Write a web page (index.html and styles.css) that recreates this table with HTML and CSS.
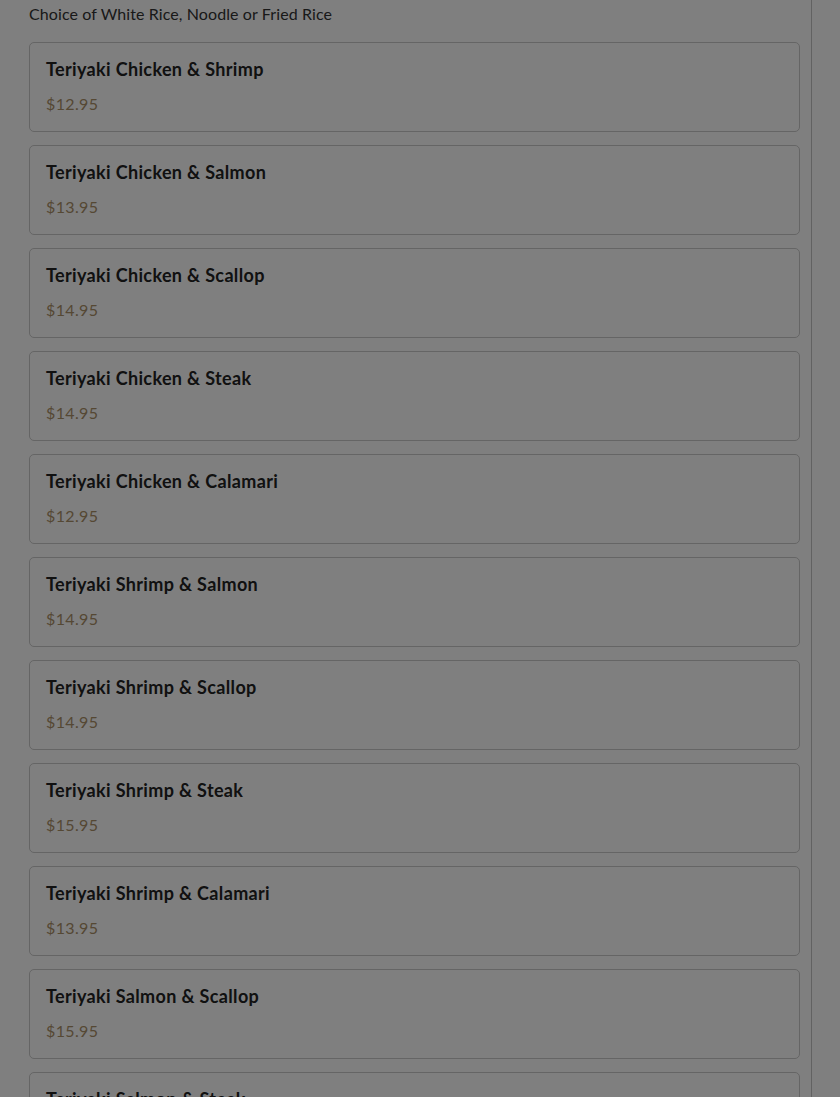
FILE: index.html
```html
<!DOCTYPE html>
<html>
<head>
<meta charset="utf-8">
<link rel="stylesheet" href="styles.css">
</head>
<body>
<div class="page">
  <main class="panel">
    <p class="subtitle">Choice of White Rice, Noodle or Fried Rice</p>
    <ul class="items">
      <li class="card"><h3 class="name">Teriyaki Chicken &amp; Shrimp</h3><div class="price">$12.95</div></li>
      <li class="card"><h3 class="name">Teriyaki Chicken &amp; Salmon</h3><div class="price">$13.95</div></li>
      <li class="card"><h3 class="name">Teriyaki Chicken &amp; Scallop</h3><div class="price">$14.95</div></li>
      <li class="card"><h3 class="name">Teriyaki Chicken &amp; Steak</h3><div class="price">$14.95</div></li>
      <li class="card"><h3 class="name">Teriyaki Chicken &amp; Calamari</h3><div class="price">$12.95</div></li>
      <li class="card"><h3 class="name">Teriyaki Shrimp &amp; Salmon</h3><div class="price">$14.95</div></li>
      <li class="card"><h3 class="name">Teriyaki Shrimp &amp; Scallop</h3><div class="price">$14.95</div></li>
      <li class="card"><h3 class="name">Teriyaki Shrimp &amp; Steak</h3><div class="price">$15.95</div></li>
      <li class="card"><h3 class="name">Teriyaki Shrimp &amp; Calamari</h3><div class="price">$13.95</div></li>
      <li class="card"><h3 class="name">Teriyaki Salmon &amp; Scallop</h3><div class="price">$15.95</div></li>
      <li class="card"><h3 class="name">Teriyaki Salmon &amp; Steak</h3><div class="price">$16.95</div></li>
    </ul>
  </main>
  <aside class="side"></aside>
</div>
<div class="overlay"></div>
</body>
</html>
```
FILE: styles.css
```css
html, body {
  margin: 0;
  padding: 0;
  height: 100%;
  overflow: hidden;
  background: #ffffff;
}
body {
  font-family: "Lato", "Noto Sans", sans-serif;
  color: #222222;
}
.page {
  display: flex;
  height: 1097px;
}
.panel {
  width: 782px;
  padding-left: 29px;
  border-right: 1px solid #c4c4c4;
  flex: none;
}
.side {
  flex: 1;
}
.subtitle {
  margin: 4px 0 0 0;
  font-size: 16px;
  line-height: 20px;
  letter-spacing: 0.1px;
  color: #333333;
}
.items {
  list-style: none;
  margin: 18px 0 0 0;
  padding: 0;
  width: 771px;
  display: flex;
  flex-direction: column;
  gap: 13px;
}
.card {
  border: 1px solid #cacaca;
  border-radius: 5px;
  padding: 14px 16px 15px;
}
.name {
  margin: 0 0 11px 0;
  font-size: 18px;
  line-height: 24px;
  font-weight: 700;
  letter-spacing: 0.35px;
  color: #222222;
}
.price {
  font-size: 16px;
  line-height: 24px;
  letter-spacing: 0.35px;
  color: #ab9068;
}
.overlay {
  position: fixed;
  inset: 0;
  background: rgba(0, 0, 0, 0.5);
}
```
